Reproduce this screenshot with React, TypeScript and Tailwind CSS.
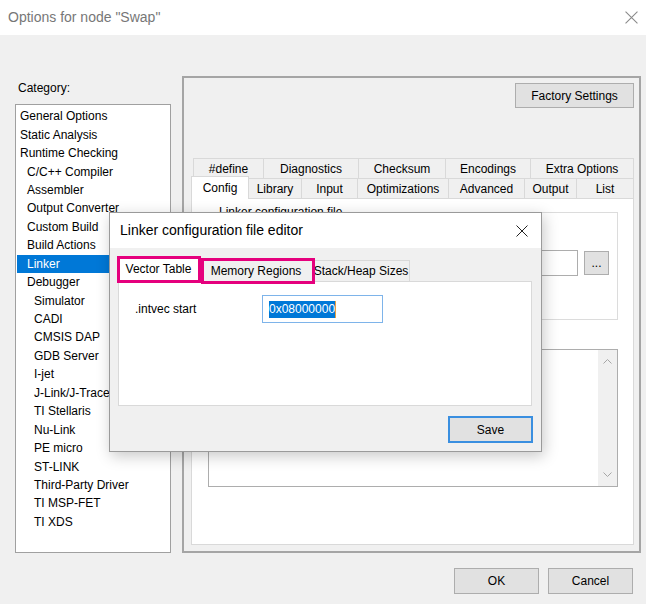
import type { ReactNode } from "react";

type Category = { label: string; level: number };

const categories: Category[] = [
  { label: "General Options", level: 0 },
  { label: "Static Analysis", level: 0 },
  { label: "Runtime Checking", level: 0 },
  { label: "C/C++ Compiler", level: 1 },
  { label: "Assembler", level: 1 },
  { label: "Output Converter", level: 1 },
  { label: "Custom Build", level: 1 },
  { label: "Build Actions", level: 1 },
  { label: "Linker", level: 1 },
  { label: "Debugger", level: 1 },
  { label: "Simulator", level: 2 },
  { label: "CADI", level: 2 },
  { label: "CMSIS DAP", level: 2 },
  { label: "GDB Server", level: 2 },
  { label: "I-jet", level: 2 },
  { label: "J-Link/J-Trace", level: 2 },
  { label: "TI Stellaris", level: 2 },
  { label: "Nu-Link", level: 2 },
  { label: "PE micro", level: 2 },
  { label: "ST-LINK", level: 2 },
  { label: "Third-Party Driver", level: 2 },
  { label: "TI MSP-FET", level: 2 },
  { label: "TI XDS", level: 2 },
];

const indent = ["pl-[3px]", "pl-[10px]", "pl-[17px]"];

const backTabs = [
  { label: "#define", w: "w-[70px]" },
  { label: "Diagnostics", w: "w-[95px]" },
  { label: "Checksum", w: "w-[87px]" },
  { label: "Encodings", w: "w-[85px]" },
  { label: "Extra Options", w: "w-[104px] border-r" },
];

const frontTabs = [
  { label: "Library", w: "w-[53px]" },
  { label: "Input", w: "w-[56px]" },
  { label: "Optimizations", w: "w-[91px]" },
  { label: "Advanced", w: "w-[76px]" },
  { label: "Output", w: "w-[52px]" },
  { label: "List", w: "w-[57px]" },
];

function CloseIcon({ className }: { className: string }) {
  return (
    <svg className={className} viewBox="0 0 12 12" fill="none" stroke="currentColor" strokeWidth="1">
      <path d="M0.5 0.5 L11.5 11.5 M11.5 0.5 L0.5 11.5" />
    </svg>
  );
}

function WinButton({ className, children }: { className: string; children: ReactNode }) {
  return (
    <div className={`flex items-center justify-center bg-[#e1e1e1] text-[12px] text-black ${className}`}>
      {children}
    </div>
  );
}

function LinkerEditor() {
  return (
    <div className="absolute left-[109px] top-[212px] flex h-[240px] w-[433px] flex-col border border-[#9a9a9a] bg-[#f0f0f0] shadow-[2px_4px_14px_rgba(0,0,0,0.22)]">
      <div className="flex h-[35px] items-center justify-between bg-white pl-[10px] pr-[13px]">
        <span className="text-[14px] text-black">Linker configuration file editor</span>
        <CloseIcon className="h-[12px] w-[12px] text-[#222]" />
      </div>

      <div className="flex h-[33px] items-end pl-[7px]">
        <div className="flex h-[25px] w-[83px] items-center justify-center border border-b-0 border-[#d9d9d9] bg-white text-[12px]">
          Vector Table
        </div>
        <div className="flex h-[21px] w-[113px] items-center justify-center border-r border-t border-[#d9d9d9] text-[12px]">
          Memory Regions
        </div>
        <div className="flex h-[21px] w-[97px] items-center justify-center border-r border-t border-[#d9d9d9] text-[12px]">
          Stack/Heap Sizes
        </div>
      </div>

      <div className="ml-[8px] h-[125px] w-[414px] border border-[#d9d9d9] bg-white pl-[16px] pt-[13px]">
        <div className="flex items-center">
          <span className="w-[127px] text-[12px]">.intvec start</span>
          <div className="flex h-[28px] w-[121px] items-center border border-[#7eb4ea] bg-white pl-[6px]">
            <span className="flex h-[17px] items-center bg-[#0078d7] text-[12px] text-white">0x08000000</span>
            <span className="h-[17px] w-px bg-[#e8a040]" />
          </div>
        </div>
      </div>

      <div className="flex justify-end pr-[8px] pt-[10px]">
        <WinButton className="h-[27px] w-[85px] border-2 border-[#3a8fe0]">Save</WinButton>
      </div>

      {/* annotation boxes */}
      <div className="absolute left-[7px] top-[43px] h-[27px] w-[84px] border-[3px] border-[#e5007d]" />
      <div className="absolute left-[91px] top-[45px] h-[26px] w-[114px] border-[3px] border-[#e5007d]" />
    </div>
  );
}

export default function App() {
  return (
    <div className="relative h-[604px] w-[646px] overflow-hidden bg-[#f0f0f0] font-['Liberation_Sans',Arial,sans-serif] text-black">
      <div className="flex h-[35px] items-center justify-between bg-white pl-[8px] pr-[8px]">
        <span className="text-[14px] text-[#777]">Options for node "Swap"</span>
        <CloseIcon className="h-[13px] w-[13px] text-[#8a8a8a]" />
      </div>

      <div className="flex items-start pt-[41px]">
        <div className="ml-[15px] w-[156px] pt-[4px]">
          <p className="pl-[3px] text-[12px] leading-[16px]">Category:</p>
          <div className="mt-[8px] h-[449px] border border-[#a0a0a0] bg-white px-px pt-[2px]">
            {categories.map((c) => (
              <div
                className={`flex h-[18.45px] items-center text-[12px] ${indent[c.level]} ${
                  c.label === "Linker" ? "bg-[#0078d7] text-white" : ""
                }`}
                key={c.label}
              >
                {c.label}
              </div>
            ))}
          </div>
        </div>

        <div className="ml-[11px] h-[477px] w-[459px] border-2 border-[#a5a5a5]">
          <div className="flex justify-end pr-[5px] pt-[5px]">
            <WinButton className="h-[25px] w-[119px] border border-[#adadad]">Factory Settings</WinButton>
          </div>

          <div className="ml-[7px] mt-[50px] w-[443px]">
            <div className="flex h-[20px] pl-[2px]">
              {backTabs.map((t) => (
                <div
                  className={`flex items-center justify-center border-l border-t border-[#d9d9d9] text-[12px] ${t.w}`}
                  key={t.label}
                >
                  {t.label}
                </div>
              ))}
            </div>
            <div className="flex h-[20px] items-end">
              <div className="relative top-px z-10 flex h-[23px] w-[58px] items-center justify-center border border-b-0 border-[#d9d9d9] bg-white text-[12px]">
                Config
              </div>
              {frontTabs.map((t) => (
                <div
                  className={`flex h-[20px] items-center justify-center border-r border-t border-[#d9d9d9] text-[12px] ${t.w}`}
                  key={t.label}
                >
                  {t.label}
                </div>
              ))}
            </div>

            <div className="h-[347px] border border-[#d9d9d9] bg-white pl-[16px] pr-[15px] pt-[5px]">
              <fieldset className="h-[116px] border border-[#dcdcdc]">
                <legend className="ml-[7px] px-[3px] text-[12px] leading-[16px]">Linker configuration file</legend>
                <div className="mt-[30px] flex items-center pl-[9px]">
                  <div className="h-[26px] w-[360px] border border-[#adadad] bg-white" />
                  <WinButton className="ml-[6px] h-[24px] w-[25px] border border-[#adadad] text-[#555]">...</WinButton>
                </div>
              </fieldset>

              <div className="mt-[29px] flex h-[138px] justify-end border border-[#adadad]">
                <div className="flex w-[19px] flex-col items-center justify-between bg-[#f0f0f0] py-[9px]">
                  <svg className="h-[5px] w-[9px]" viewBox="0 0 9 5" fill="none" stroke="#a6a6a6">
                    <path d="M0.5 4.5 L4.5 0.5 L8.5 4.5" />
                  </svg>
                  <svg className="h-[5px] w-[9px]" viewBox="0 0 9 5" fill="none" stroke="#a6a6a6">
                    <path d="M0.5 0.5 L4.5 4.5 L8.5 0.5" />
                  </svg>
                </div>
              </div>
            </div>
          </div>
        </div>
      </div>

      <div className="mt-[15px] flex justify-end gap-[9px] pr-[13px]">
        <WinButton className="h-[26px] w-[85px] border border-[#adadad]">OK</WinButton>
        <WinButton className="h-[26px] w-[85px] border border-[#adadad]">Cancel</WinButton>
      </div>

      <LinkerEditor />
    </div>
  );
}
